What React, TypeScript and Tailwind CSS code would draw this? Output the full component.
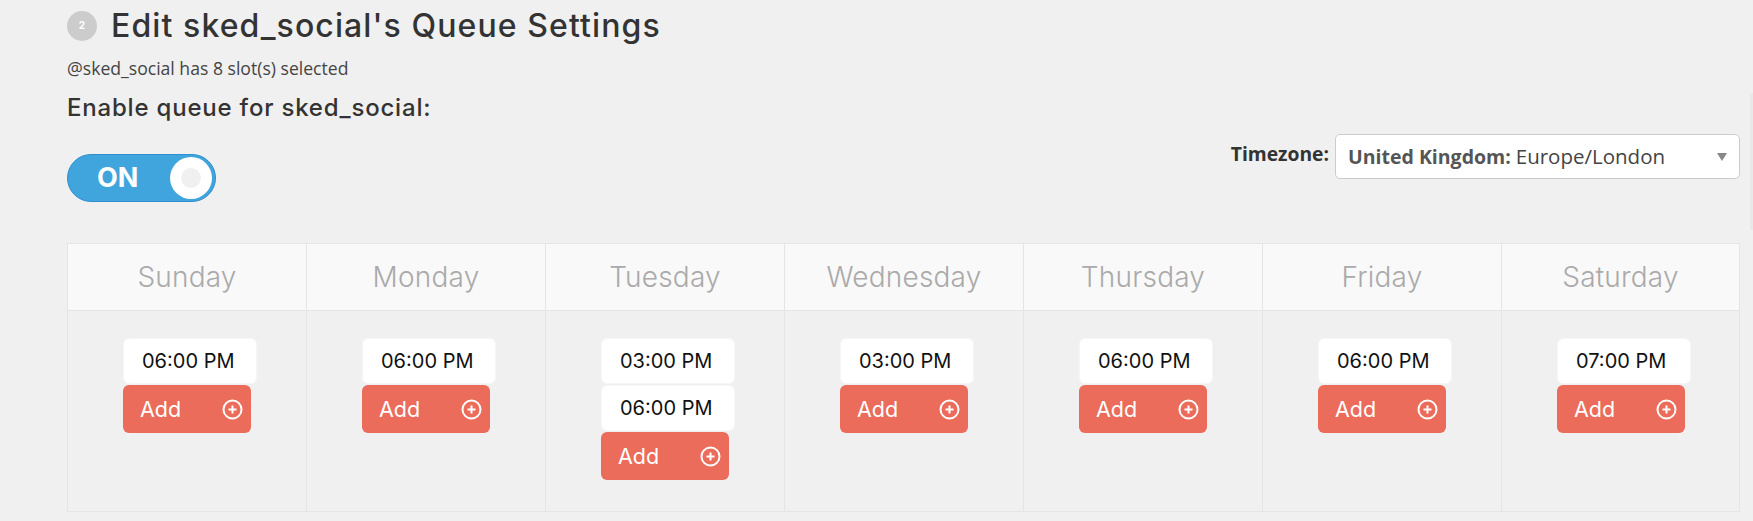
const inter = { fontFamily: '"Inter", "Liberation Sans", sans-serif' }

const days = [
  { name: 'Sunday', slots: ['06:00 PM'] },
  { name: 'Monday', slots: ['06:00 PM'] },
  { name: 'Tuesday', slots: ['03:00 PM', '06:00 PM'] },
  { name: 'Wednesday', slots: ['03:00 PM'] },
  { name: 'Thursday', slots: ['06:00 PM'] },
  { name: 'Friday', slots: ['06:00 PM'] },
  { name: 'Saturday', slots: ['07:00 PM'] },
]

function PlusCircle() {
  return (
    <svg width="21" height="21" viewBox="0 0 21 21" fill="none" stroke="white">
      <circle cx="10.5" cy="10.5" r="9" strokeWidth="2" />
      <path d="M10.5 6.5v8M6.5 10.5h8" strokeWidth="2" />
    </svg>
  )
}

function DayColumn({ name, slots, last }: { name: string; slots: string[]; last: boolean }) {
  return (
    <div className={`flex flex-col ${last ? '' : 'border-r border-[#e5e5e5]'}`}>
      <div className="h-[67px] bg-[#f9f9f9] border-b border-[#e5e5e5] flex items-center justify-center font-['Inter',sans-serif] text-[28px] tracking-[0.2px] font-light text-[#aaaaaa]">
        {name}
      </div>
      <div className="flex-1 pt-[27px] pl-[55px] flex flex-col items-start">
        {slots.map((slot, i) => (
          <div
            key={i}
            className="w-[134px] h-[46px] mb-[1px] bg-white rounded-[6px] border border-[#f6f6f6] flex items-center pl-[18px] text-[20px] text-[#111111] font-['Inter',sans-serif]"
          >
            {slot}
          </div>
        ))}
        <button className="w-[128px] h-[48px] bg-[#eb6c5a] rounded-[6px] flex items-center justify-between pl-[17px] pr-[8px] text-[21.5px] text-white font-['Inter',sans-serif]">
          Add
          <PlusCircle />
        </button>
      </div>
    </div>
  )
}

export default function App() {
  return (
    <div className="relative w-[1753px] h-[521px] overflow-hidden bg-[#f0f0f0] pl-[67px] pr-[13px] text-[#333333]" style={inter}>
      <div className="flex items-center pt-[7px] h-[44px]">
        <span className="w-[30px] h-[30px] rounded-full bg-[#cccccc] text-white text-[10px] font-bold flex items-center justify-center">2</span>
        <h1 className="ml-[14px] text-[32px] font-medium tracking-[1.1px] leading-none">Edit sked_social's Queue Settings</h1>
      </div>

      <p className="mt-[14px] text-[17.6px] leading-[20px] font-['Open_Sans',sans-serif] text-[#444444]">
        @sked_social has 8 slot(s) selected
      </p>
      <p className="mt-[17px] text-[24px] tracking-[0.8px] leading-[26px] font-medium">Enable queue for sked_social:</p>

      <div className="flex items-start justify-between mt-[13px] h-[109px]">
        <div className="mt-[20px] w-[149px] h-[48px] rounded-full bg-[#40a5dc] border border-[#2f8fd0] flex items-center justify-between pl-[29px] pr-[3px]">
          <span className="text-[27px] font-bold text-white">ON</span>
          <span className="w-[42px] h-[42px] rounded-full bg-white flex items-center justify-center">
            <span className="w-[20px] h-[20px] rounded-full bg-[#f0f0f0]" />
          </span>
        </div>

        <div className="flex items-center">
          <span className="text-[19.3px] font-bold font-['Open_Sans',sans-serif] text-[#333333] mr-[6px] -mt-[4px]">Timezone:</span>
          <div className="relative w-[405px] h-[45px] bg-white border border-[#cccccc] rounded-[5px] flex items-center pl-[12px] text-[20.5px] font-['Open_Sans',sans-serif] text-[#444444]">
            <b className="mr-[5px] text-[19.5px] font-bold text-[#555555]">United Kingdom:</b> Europe/London
            <span className="absolute right-[12px] top-[18px] w-0 h-0 border-l-[5px] border-r-[5px] border-t-[8px] border-l-transparent border-r-transparent border-t-[#888888]" />
          </div>
        </div>
      </div>

      <div className="grid grid-cols-[repeat(6,239px)_1fr] w-[1673px] h-[269px] border border-[#e5e5e5]">
        {days.map((d, i) => (
          <DayColumn key={d.name} name={d.name} slots={d.slots} last={i === days.length - 1} />
        ))}
      </div>

      <div className="absolute right-0 top-[93px] w-[3px] h-[137px] bg-[#e9e9e9]" />
    </div>
  )
}
